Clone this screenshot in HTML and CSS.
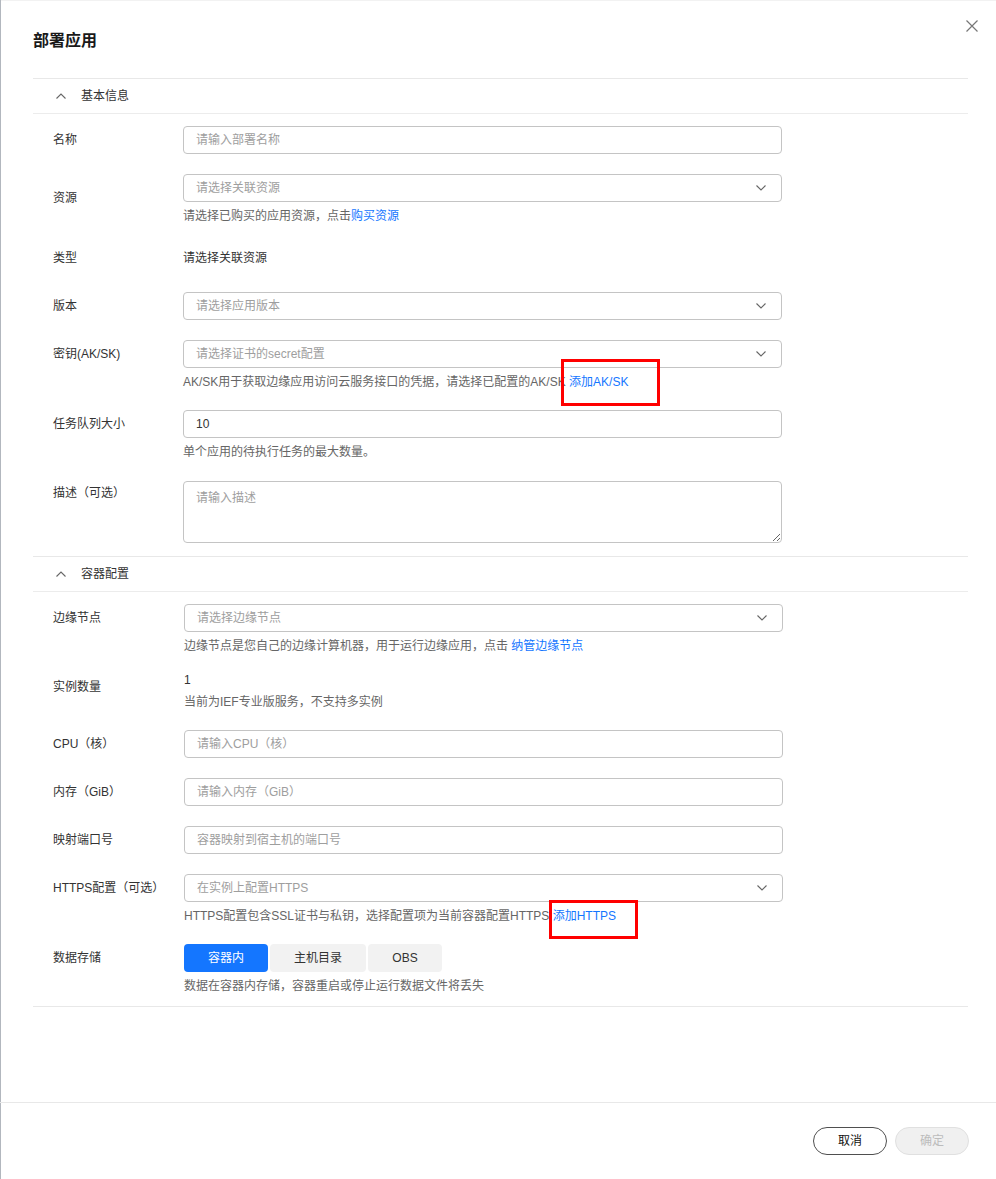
FILE: index.html
```html
<!DOCTYPE html>
<html lang="zh-CN">
<head>
<meta charset="utf-8">
<title>部署应用</title>
<link rel="stylesheet" href="styles.css">
</head>
<body>
<div class="dialog">
  <header class="dlg-head">
    <h1 class="dlg-title">部署应用</h1>
    <button class="close" type="button" aria-label="关闭">
      <svg viewBox="0 0 12 12" width="12" height="12"><path d="M0.5 0.5 L11.5 11.5 M11.5 0.5 L0.5 11.5" stroke="#777" stroke-width="1.2" fill="none"/></svg>
    </button>
  </header>

  <main class="dlg-body">
    <section class="sec first">
      <div class="sec-head">
        <svg class="chev-up" viewBox="0 0 10 6" width="10" height="6"><polyline points="0.5,5.5 5,1 9.5,5.5" stroke="#666" stroke-width="1.1" fill="none"/></svg>
        <span>基本信息</span>
      </div>
      <div class="sec-content">
        <div class="row">
          <div class="label">名称</div>
          <div class="field"><input class="input" type="text" placeholder="请输入部署名称"></div>
        </div>
        <div class="row has-help">
          <div class="label label-res">资源</div>
          <div class="field">
            <div class="input select"><span class="ph">请选择关联资源</span><svg class="chev" viewBox="0 0 10 6" width="10" height="6"><polyline points="0.5,0.5 5,5 9.5,0.5" stroke="#666" stroke-width="1.1" fill="none"/></svg></div>
            <div class="help">请选择已购买的应用资源，点击<a class="link">购买资源</a></div>
          </div>
        </div>
        <div class="row">
          <div class="label">类型</div>
          <div class="field"><div class="value">请选择关联资源</div></div>
        </div>
        <div class="row">
          <div class="label">版本</div>
          <div class="field">
            <div class="input select"><span class="ph">请选择应用版本</span><svg class="chev" viewBox="0 0 10 6" width="10" height="6"><polyline points="0.5,0.5 5,5 9.5,0.5" stroke="#666" stroke-width="1.1" fill="none"/></svg></div>
          </div>
        </div>
        <div class="row has-help">
          <div class="label">密钥(AK/SK)</div>
          <div class="field">
            <div class="input select"><span class="ph">请选择证书的secret配置</span><svg class="chev" viewBox="0 0 10 6" width="10" height="6"><polyline points="0.5,0.5 5,5 9.5,0.5" stroke="#666" stroke-width="1.1" fill="none"/></svg></div>
            <div class="help">AK/SK用于获取边缘应用访问云服务接口的凭据，请选择已配置的AK/SK <a class="link">添加AK/SK</a></div>
          </div>
        </div>
        <div class="row has-help row-queue">
          <div class="label">任务队列大小</div>
          <div class="field">
            <input class="input" type="text" value="10">
            <div class="help">单个应用的待执行任务的最大数量。</div>
          </div>
        </div>
        <div class="row">
          <div class="label label-desc">描述（可选）</div>
          <div class="field"><textarea class="textarea" placeholder="请输入描述"></textarea></div>
        </div>
      </div>
    </section>

    <section class="sec">
      <div class="sec-head">
        <svg class="chev-up" viewBox="0 0 10 6" width="10" height="6"><polyline points="0.5,5.5 5,1 9.5,5.5" stroke="#666" stroke-width="1.1" fill="none"/></svg>
        <span>容器配置</span>
      </div>
      <div class="sec-content sec2">
        <div class="row has-help row-node">
          <div class="label">边缘节点</div>
          <div class="field">
            <div class="input select"><span class="ph">请选择边缘节点</span><svg class="chev" viewBox="0 0 10 6" width="10" height="6"><polyline points="0.5,0.5 5,5 9.5,0.5" stroke="#666" stroke-width="1.1" fill="none"/></svg></div>
            <div class="help">边缘节点是您自己的边缘计算机器，用于运行边缘应用，点击 <a class="link">纳管边缘节点</a></div>
          </div>
        </div>
        <div class="row has-help">
          <div class="label label-count">实例数量</div>
          <div class="field">
            <div class="value-line">1</div>
            <div class="help help-tight">当前为IEF专业版服务，不支持多实例</div>
          </div>
        </div>
        <div class="row">
          <div class="label">CPU（核）</div>
          <div class="field"><input class="input" type="text" placeholder="请输入CPU（核）"></div>
        </div>
        <div class="row">
          <div class="label">内存（GiB）</div>
          <div class="field"><input class="input" type="text" placeholder="请输入内存（GiB）"></div>
        </div>
        <div class="row">
          <div class="label">映射端口号</div>
          <div class="field"><input class="input" type="text" placeholder="容器映射到宿主机的端口号"></div>
        </div>
        <div class="row has-help">
          <div class="label">HTTPS配置（可选）</div>
          <div class="field">
            <div class="input select"><span class="ph">在实例上配置HTTPS</span><svg class="chev" viewBox="0 0 10 6" width="10" height="6"><polyline points="0.5,0.5 5,5 9.5,0.5" stroke="#666" stroke-width="1.1" fill="none"/></svg></div>
            <div class="help">HTTPS配置包含SSL证书与私钥，选择配置项为当前容器配置HTTPS <a class="link">添加HTTPS</a></div>
          </div>
        </div>
        <div class="row">
          <div class="label">数据存储</div>
          <div class="field">
            <div class="seg">
              <button class="seg-btn active seg-a" type="button">容器内</button>
              <button class="seg-btn seg-b" type="button">主机目录</button>
              <button class="seg-btn seg-c" type="button">OBS</button>
            </div>
            <div class="help">数据在容器内存储，容器重启或停止运行数据文件将丢失</div>
          </div>
        </div>
      </div>
    </section>
  </main>

  <footer class="dlg-foot">
    <button class="btn btn-cancel" type="button">取消</button>
    <button class="btn btn-ok" type="button" disabled>确定</button>
  </footer>
</div>

<div class="mark mark-1"></div>
<div class="mark mark-2"></div>
</body>
</html>
```

FILE: styles.css
```css
html, body {
  margin: 0;
  padding: 0;
  background: #fff;
}

body {
  position: relative;
  font-family: "Liberation Sans", "Noto Sans CJK SC", sans-serif;
  font-size: 12px;
  color: #333;
}

.dialog {
  min-height: 1179px;
  display: flex;
  flex-direction: column;
  background: #fff;
  box-shadow: inset 1px 0 0 #b2b7be, inset 0 1px 0 #f2f2f2;
}

/* header */
.dlg-head {
  height: 78px;
  display: flex;
  justify-content: space-between;
  align-items: flex-start;
  padding: 0 18px 0 33px;
}

.dlg-title {
  margin: 30px 0 0;
  font-size: 16px;
  line-height: 22px;
  font-weight: bold;
  color: #191919;
}

.close {
  margin-top: 20px;
  width: 12px;
  height: 12px;
  padding: 0;
  border: 0;
  background: none;
  display: block;
}

.close svg {
  display: block;
}

/* body */
.dlg-body {
  padding: 0 28px 0 33px;
}

.sec {
  border-bottom: 1px solid #e8e8e8;
}

.sec.first {
  border-top: 1px solid #e8e8e8;
}

.sec-head {
  height: 34px;
  display: flex;
  align-items: center;
  padding-left: 23px;
  border-bottom: 1px solid #ececec;
  color: #333;
  line-height: 18px;
}

.chev-up {
  display: block;
  margin-right: 15px;
}

.sec-content {
  padding: 12px 0 13px 20px;
}

.sec-content.sec2 {
  padding-bottom: 11px;
}

.row {
  display: flex;
  margin-bottom: 20px;
}

.row.has-help {
  margin-bottom: 19px;
}

.row.row-queue {
  margin-bottom: 20px;
}

.row.row-node {
  margin-bottom: 16px;
}

.row:last-child {
  margin-bottom: 0;
}

.label {
  width: 130px;
  flex: none;
  line-height: 28px;
  color: #333;
  white-space: nowrap;
}

.sec2 .label {
  width: 131px;
}

.label-res {
  padding-top: 10px;
}

.label-count {
  padding-top: 2px;
}

.label-desc {
  line-height: 24px;
}

.field {
  width: 599px;
  flex: none;
}

.input {
  box-sizing: border-box;
  width: 100%;
  height: 28px;
  margin: 0;
  border: 1px solid #c4c4c4;
  border-radius: 4px;
  padding: 0 12px;
  background: #fff;
  font-family: inherit;
  font-size: 12px;
  color: #333;
  outline: none;
  display: flex;
  align-items: center;
}

.input::placeholder,
.textarea::placeholder {
  color: #9e9e9e;
}

.select {
  justify-content: space-between;
  padding-right: 15px;
}

.ph {
  color: #9e9e9e;
  line-height: 18px;
}

.chev {
  display: block;
  flex: none;
}

.value {
  line-height: 28px;
  color: #333;
}

.value-line {
  line-height: 18px;
  color: #333;
}

.textarea {
  box-sizing: border-box;
  display: block;
  width: 100%;
  height: 62px;
  margin: 0;
  padding: 7px 12px;
  border: 1px solid #c4c4c4;
  border-radius: 4px;
  font-family: inherit;
  font-size: 12px;
  line-height: 18px;
  color: #333;
  outline: none;
  resize: vertical;
}

.help {
  margin-top: 5px;
  line-height: 18px;
  color: #666;
  white-space: nowrap;
}

.help.help-tight {
  margin-top: 4px;
}

.link {
  color: #1476ff;
  text-decoration: none;
  cursor: pointer;
}

/* segmented control */
.seg {
  display: flex;
  gap: 2px;
}

.seg-btn {
  height: 28px;
  padding: 0;
  border: 0;
  border-radius: 4px;
  background: #f2f2f2;
  color: #333;
  font-family: inherit;
  font-size: 12px;
  line-height: 28px;
  text-align: center;
}

.seg-btn.active {
  background: #1476ff;
  color: #fff;
}

.seg-a { width: 84px; }
.seg-b { width: 96px; }
.seg-c { width: 74px; }

/* footer */
.dlg-foot {
  margin-top: auto;
  height: 77px;
  box-sizing: border-box;
  border-top: 1px solid #e8e8e8;
  display: flex;
  justify-content: flex-end;
  align-items: center;
  gap: 8px;
  padding-right: 27px;
}

.btn {
  box-sizing: border-box;
  width: 74px;
  height: 28px;
  border-radius: 14px;
  padding: 0;
  font-family: inherit;
  font-size: 12px;
  line-height: 26px;
  text-align: center;
}

.btn-cancel {
  background: #fff;
  border: 1px solid #4f4f4f;
  color: #111;
}

.btn-ok {
  background: #f0f0f0;
  border: 1px solid #e0e0e0;
  color: #bcbcbc;
}

/* annotation boxes drawn over the screenshot */
.mark {
  position: absolute;
  box-sizing: border-box;
  border: 3px solid #f00;
}

.mark-1 {
  left: 561px;
  top: 359px;
  width: 99px;
  height: 47px;
}

.mark-2 {
  left: 549px;
  top: 900px;
  width: 89px;
  height: 39px;
}
```
